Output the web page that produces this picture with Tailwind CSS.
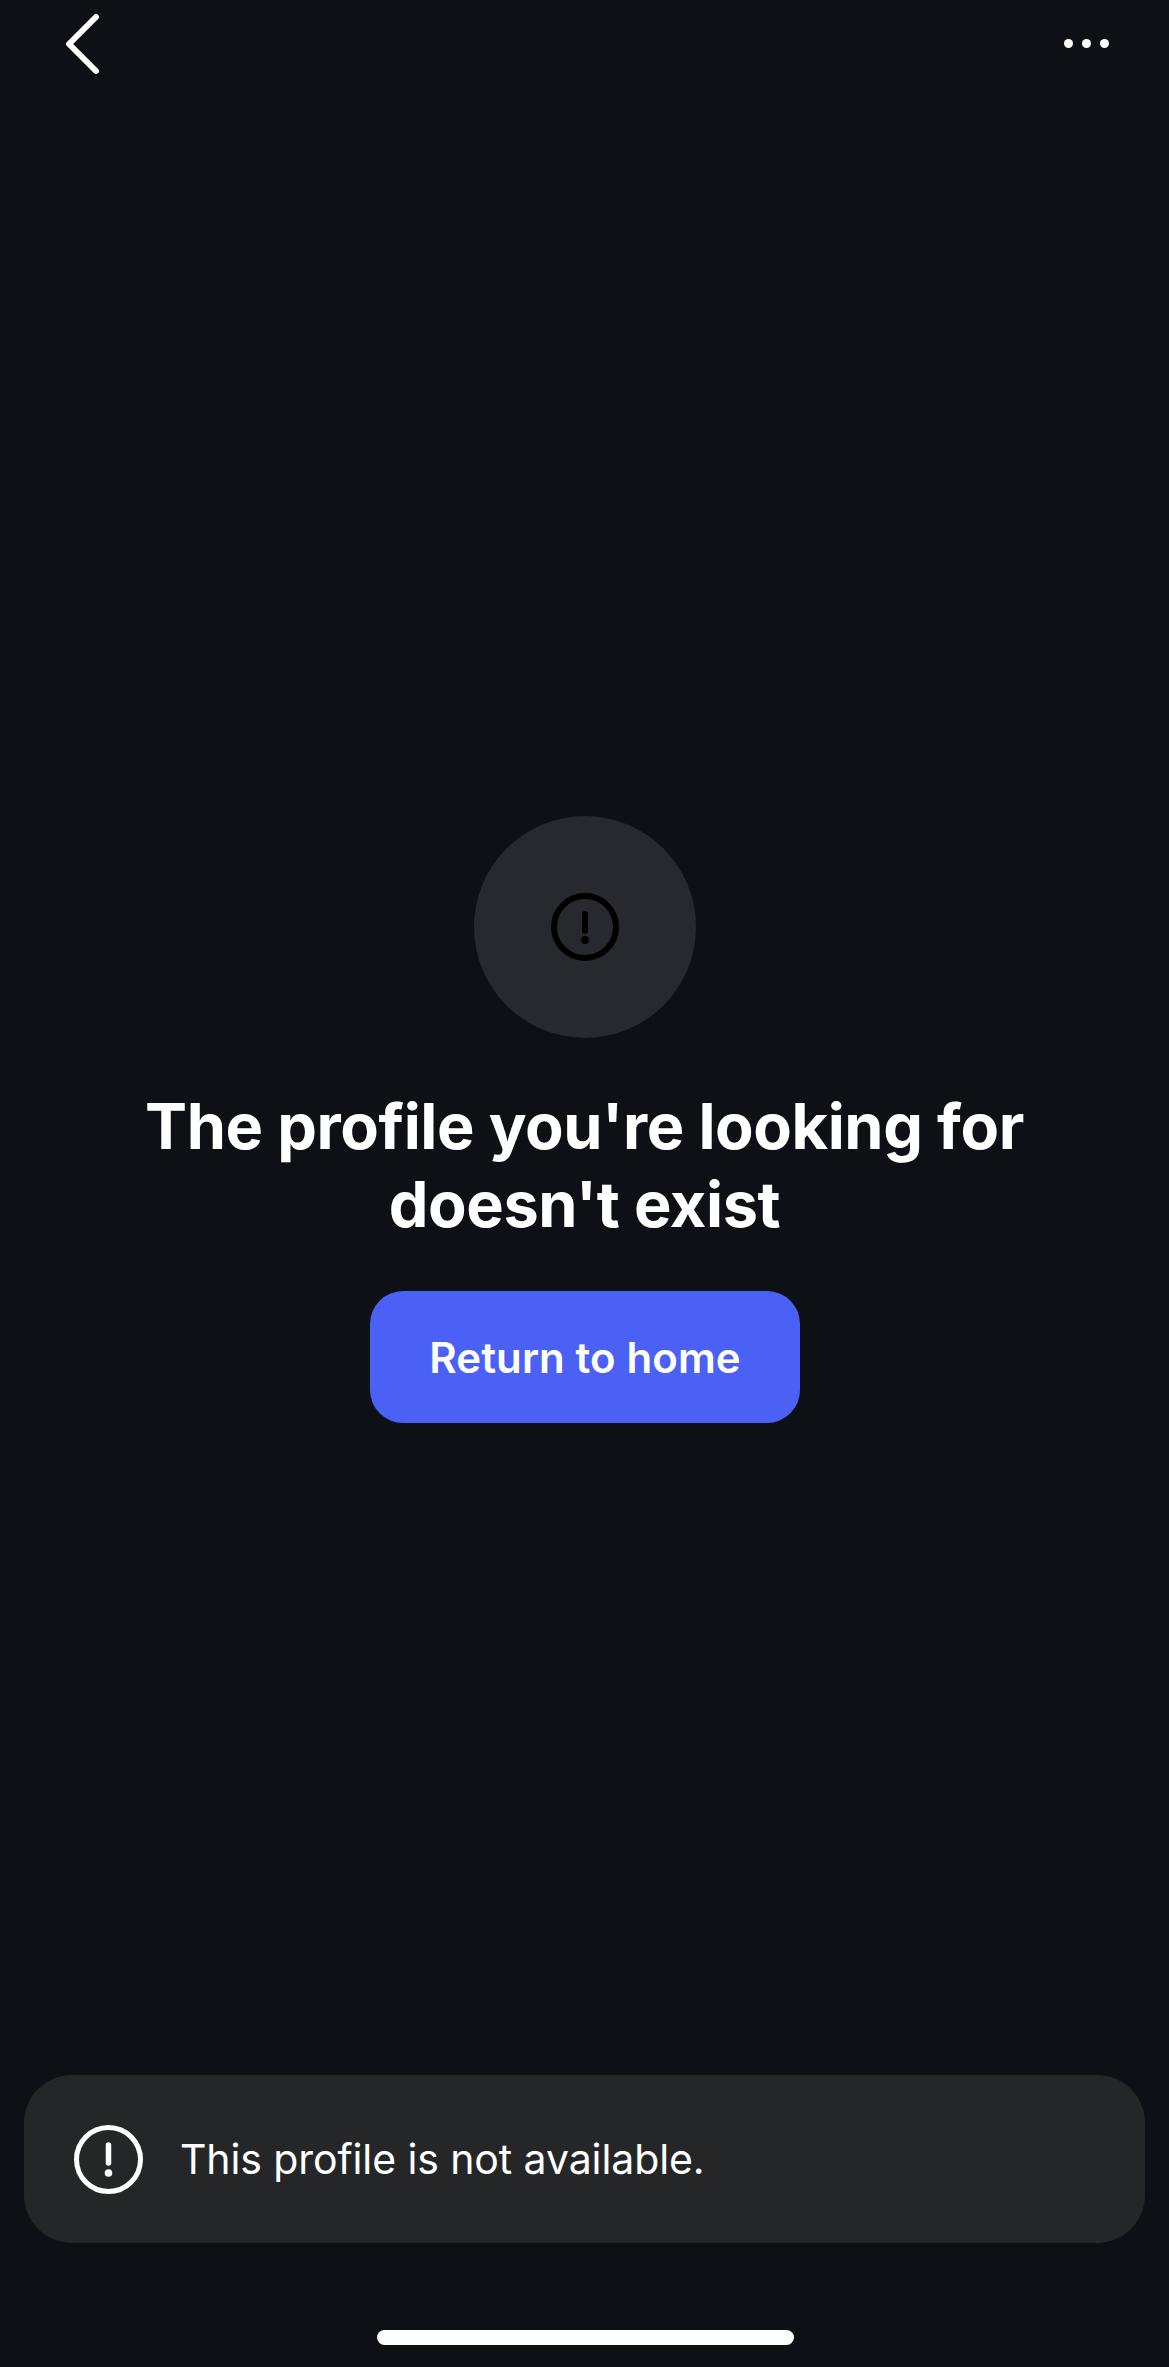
<!doctype html>
<html lang="en"><head><meta charset="utf-8"><script src="https://cdn.jsdelivr.net/npm/@tailwindcss/browser@4"></script></head>
<body class="bg-[#0d1116]">
<div class="w-[1169px] h-[2367px] flex flex-col bg-[#0d1116] text-white font-['Inter',sans-serif] overflow-hidden">
  <header class="h-[88px] flex items-start justify-between pl-[64px] pr-[60px] shrink-0">
    <svg class="mt-[12px] w-[38px] h-[64px]" viewBox="0 0 38 64" fill="none" stroke="white" stroke-width="6" stroke-linecap="round" stroke-linejoin="round"><path d="M32 5 L5 32 L32 59"/></svg>
    <div class="mt-[39px] flex gap-[9px]">
      <span class="w-[9px] h-[9px] rounded-full bg-white"></span>
      <span class="w-[9px] h-[9px] rounded-full bg-white"></span>
      <span class="w-[9px] h-[9px] rounded-full bg-white"></span>
    </div>
  </header>
  <main class="mt-[728px] flex flex-col items-center shrink-0">
    <div class="w-[222px] h-[222px] rounded-full bg-[#26292e] flex items-center justify-center">
      <svg class="w-[68px] h-[68px]" viewBox="0 0 68 68" fill="none"><circle cx="34" cy="34" r="31" stroke="#000" stroke-width="6"/><path d="M34 21 V38" stroke="#000" stroke-width="6" stroke-linecap="round"/><circle cx="34" cy="47" r="4" fill="#000"/></svg>
    </div>
    <h1 class="mt-[49px] text-center text-[63px] leading-[78px] font-bold tracking-[-0.4px]">The profile you're looking for<br>doesn't exist</h1>
    <button class="mt-[48px] self-start ml-[370px] w-[430px] h-[132px] rounded-[33px] bg-[#4b61f6] text-[42px] font-semibold tracking-[0.1px] text-white flex items-center justify-center">Return to home</button>
  </main>
  <div class="mt-[652px] mx-[24px] h-[168px] rounded-[48px] bg-[#252628] flex items-center pl-[50px] gap-[37px] shrink-0">
    <svg class="w-[69px] h-[69px] shrink-0" viewBox="0 0 69 69" fill="none"><circle cx="34.5" cy="34.5" r="32" stroke="white" stroke-width="5"/><path d="M34.5 20 V38" stroke="white" stroke-width="5.5" stroke-linecap="round"/><circle cx="34.5" cy="48" r="3.8" fill="white"/></svg>
    <span class="text-[41px] font-normal leading-none tracking-[-0.1px]">This profile is not available.</span>
  </div>
  <div class="mt-[87px] ml-[377px] w-[417px] h-[15px] rounded-full bg-white shrink-0"></div>
</div>
</body></html>
